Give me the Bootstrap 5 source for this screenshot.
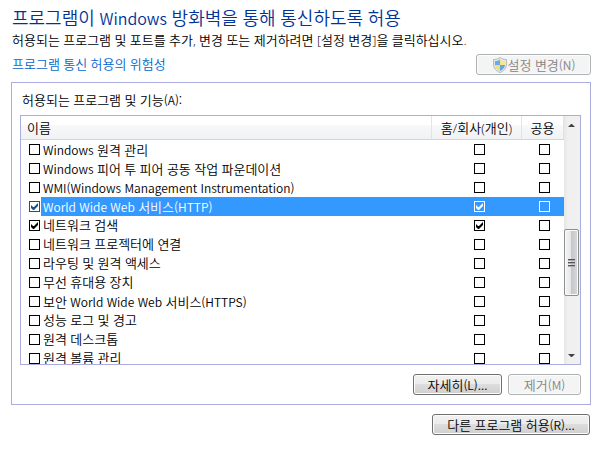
<!DOCTYPE html>
<html lang="ko">
<head>
<meta charset="utf-8">
<meta name="viewport" content="width=device-width, initial-scale=1">
<title>프로그램이 Windows 방화벽을 통해 통신하도록 허용</title>
<link rel="stylesheet" href="https://cdn.jsdelivr.net/npm/bootstrap@5.3.0/dist/css/bootstrap.min.css">
<style>
  body { font-family: "Open Sans", "Noto Sans CJK KR", sans-serif; font-size: 13px; font-weight: 350; line-height: 19px; color: #000; background: #fff; }
  .latin { font-family: "Noto Sans CJK KR", sans-serif; font-size: 12px; }
  .page { padding: 7px 9px 8px 11px; }
  h1 { font-size: 18px; line-height: 22px; color: #003399; font-weight: 350; }
  h1 .latin { font-size: 16px; }
  .intro { padding-left: 1px; }
  .intro p { margin: 2px 0 4px; }
  .risk { color: #0066cc; }
  .frame { border: 1px solid #abadde; margin-top: 7px; padding: 7px 9px 9px 8px; }
  .frame h2 { font-size: 13px; line-height: 19px; font-weight: 350; margin: 0 0 5px; padding-left: 2px; }
  .list { height: 250px; border: 1px solid #abadde; }
  .programs { table-layout: fixed; line-height: 19px; }
  .programs th { height: 23px; padding: 2px 0 0; font-weight: 350; line-height: 20px; border-bottom: 1px solid #d5d5d5; border-right: 1px solid #e2e4e8; background: linear-gradient(#fff 0 40%, #f7f8fa 40%, #f1f2f4); }
  .programs th:first-child { padding-left: 6px; }
  .programs td { height: 19px; padding: 0; }
  .col-home { width: 90px; }
  .col-public { width: 42px; }
  .tick { appearance: none; flex: none; display: block; width: 11px; height: 11px; margin: 0; border: 1px solid #000; background: #fff center / 9px 9px no-repeat; border-radius: 0; }
  .tick:checked { background-image: url("data:image/svg+xml,%3Csvg xmlns='http://www.w3.org/2000/svg' viewBox='0 0 9 9'%3E%3Cpath d='M1 3v3l2 2h1l4-4V1L4 5H3z'/%3E%3C/svg%3E"); }
  .name-cell { padding-left: 8px; gap: 1px; }
  .name-cell label { flex: 1; padding-left: 2px; height: 19px; white-space: nowrap; overflow: hidden; }
  .home-cell { padding-left: 42px; }
  .public-cell { padding-left: 17px; }
  .selected label { background: #3399ff; color: #fff; }
  .selected td + td { background: #3399ff; }
  .selected .tick { border-color: #1c4f85; }
  .selected td + td .tick { border-color: #fff; background-color: #3399ff; }
  .selected .name-cell .tick:checked { background-image: url("data:image/svg+xml,%3Csvg xmlns='http://www.w3.org/2000/svg' viewBox='0 0 9 9'%3E%3Cpath fill='%231c4f85' d='M1 3v3l2 2h1l4-4V1L4 5H3z'/%3E%3C/svg%3E"); }
  .selected td + td .tick:checked { background-image: url("data:image/svg+xml,%3Csvg xmlns='http://www.w3.org/2000/svg' viewBox='0 0 9 9'%3E%3Cpath fill='%23fff' d='M1 3v3l2 2h1l4-4V1L4 5H3z'/%3E%3C/svg%3E"); }
  .scroller { flex: none; width: 16px; padding: 7px 1px 6px 0; background: linear-gradient(90deg, #e6e6e6, #f0f0f0 25%, #f0f0f0); }
  .thumb { height: 67px; margin-top: 101px; border: 1px solid #8e8f8f; border-radius: 2px; box-shadow: inset 0 0 0 1px #fafafa; background: linear-gradient(90deg, #f5f5f5, #e6e6e8 45%, #c6c7cc 50%, #d8d9dc); }
  .win-btn { --bs-btn-padding-x: 0; --bs-btn-padding-y: 0; --bs-btn-font-size: 13px; --bs-btn-font-weight: 350; --bs-btn-line-height: 19px; --bs-btn-border-radius: 3px; --bs-btn-color: #000; --bs-btn-border-color: #707070; --bs-btn-disabled-color: #838383; --bs-btn-disabled-border-color: #adb2b5; --bs-btn-disabled-opacity: 1; height: 21px; box-shadow: inset 0 0 0 1px #fcfcfc; background: linear-gradient(#f2f2f2, #ebebeb 49%, #dddddd 50%, #cfcfcf); white-space: nowrap; }
  .win-btn:disabled { background: #f4f4f4; }
  .btn-change { width: 115px; }
  .btn-detail { width: 89px; }
  .btn-remove { width: 73px; }
  .btn-other { width: 158px; margin-right: 1px; }
  .actions { gap: 6px; padding-top: 9px; }
  .other { padding-top: 9px; }
</style>
<script src="https://cdn.jsdelivr.net/npm/bootstrap@5.3.0/dist/js/bootstrap.bundle.min.js"></script>
</head>
<body>
<main class="page">
  <div class="intro">
    <h1 class="m-0">프로그램이 <span class="latin">Windows</span> 방화벽을 통해 통신하도록 허용</h1>
    <p>허용되는 프로그램 및 포트를 추가, 변경 또는 제거하려면 [설정 변경]을 클릭하십시오.</p>
    <div class="d-flex justify-content-between align-items-center">
      <a class="risk text-decoration-none" href="#">프로그램 통신 허용의 위험성</a>
      <button class="btn win-btn btn-change d-flex align-items-center justify-content-center" type="button" disabled>
        <svg width="16" height="16" viewBox="0 0 16 16" aria-hidden="true">
          <path d="M8 .5C6 2 4 2.500 1.500 2.500V7c0 4 2.500 7 6.500 8.500 4-1.500 6.500-4.500 6.500-8.500V2.500C12 2.500 10 2 8 .5z" fill="#e3e7ea" stroke="#b4b9bd"/>
          <path d="M8 2.500C6.500 3.500 5 4 3 4v4h5z" fill="#62aee8"/>
          <path d="M8 2.500C9.500 3.500 11 4 13 4v4H8z" fill="#fae38a"/>
          <path d="M3 8c.3 2.800 2.200 4.800 5 6V8z" fill="#f6dc7c"/>
          <path d="M13 8c-.3 2.800-2.200 4.800-5 6V8z" fill="#62a6e0"/>
        </svg>
        <span>설정 변경<span class="latin">(N)</span></span>
      </button>
    </div>
  </div>
  <section class="frame">
    <h2>허용되는 프로그램 및 기능<span class="latin">(A):</span></h2>
    <div class="list d-flex overflow-hidden">
      <div class="flex-grow-1 overflow-hidden">
        <table class="programs w-100">
          <colgroup><col><col class="col-home"><col class="col-public"></colgroup>
          <thead><tr><th scope="col">이름</th><th class="text-center" scope="col">홈/회사(개인)</th><th class="text-center" scope="col">공용</th></tr></thead>
          <tbody id="rows"></tbody>
        </table>
      </div>
      <div class="scroller d-flex flex-column" aria-hidden="true">
        <svg class="mx-auto" width="7" height="5" viewBox="0 0 7 5"><path d="M0 4h7L4 1H3z" fill="#444"/></svg>
        <div class="thumb d-flex align-items-center justify-content-center">
          <svg width="7" height="8" viewBox="0 0 7 8"><path d="M0 .5h7M0 3.500h7M0 6.500h7" stroke="#555"/><path d="M0 1.500h7M0 4.500h7M0 7.500h7" stroke="#aaa"/></svg>
        </div>
        <svg class="mx-auto mt-auto" width="7" height="5" viewBox="0 0 7 5"><path d="M0 1h7L4 4H3z" fill="#444"/></svg>
      </div>
    </div>
    <div class="actions d-flex justify-content-end">
      <button class="btn win-btn btn-detail" type="button">자세히<span class="latin">(L)...</span></button>
      <button class="btn win-btn btn-remove" type="button" disabled>제거<span class="latin">(M)</span></button>
    </div>
  </section>
  <div class="other d-flex justify-content-end">
    <button class="btn win-btn btn-other" type="button">다른 프로그램 허용<span class="latin">(R)...</span></button>
  </div>
</main>
<script>
  const programs = [
    ["Windows 원격 관리"],
    ["Windows 피어 투 피어 공동 작업 파운데이션"],
    ["WMI(Windows Management Instrumentation)"],
    ["World Wide Web 서비스(HTTP)", true, true],
    ["네트워크 검색", true],
    ["네트워크 프로젝터에 연결"],
    ["라우팅 및 원격 액세스"],
    ["무선 휴대용 장치"],
    ["보안 World Wide Web 서비스(HTTPS)"],
    ["성능 로그 및 경고"],
    ["원격 데스크톱"],
    ["원격 볼륨 관리"]
  ];
  const markLatin = text => text.replace(/[A-Za-z()]+( [A-Za-z()]+)*/g, '<span class="latin">$&</span>');
  document.getElementById("rows").innerHTML = programs.map(([name, on, selected], i) => `
    <tr class="${selected ? "selected" : ""}">
      <td><div class="name-cell d-flex align-items-center"><input class="tick" type="checkbox" id="p${i}" ${on ? "checked" : ""}><label for="p${i}">${markLatin(name)}</label></div></td>
      <td><div class="home-cell"><input class="tick" type="checkbox" aria-label="${name} 홈/회사(개인)" ${on ? "checked" : ""}></div></td>
      <td><div class="public-cell"><input class="tick" type="checkbox" aria-label="${name} 공용"></div></td>
    </tr>`).join("");
</script>
</body>
</html>
